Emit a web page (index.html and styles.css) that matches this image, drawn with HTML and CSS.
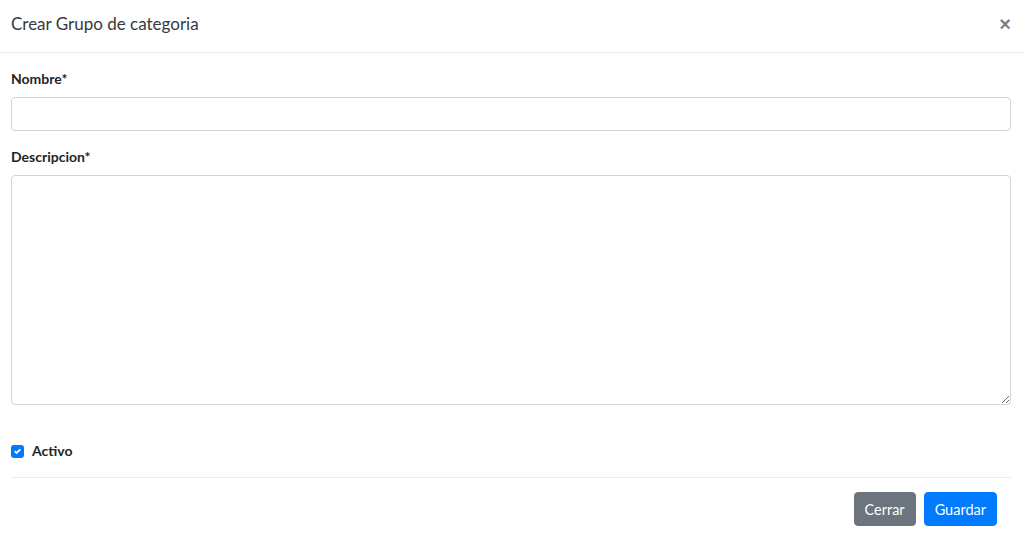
FILE: index.html
```html
<!DOCTYPE html>
<html lang="es">
<head>
<meta charset="utf-8">
<title>Crear Grupo de categoria</title>
<link rel="stylesheet" href="styles.css">
</head>
<body>
<div class="modal">
  <div class="modal-header">
    <h4 class="modal-title">Crear Grupo de categoria</h4>
    <button class="close" type="button" aria-label="Close">&times;</button>
  </div>
  <form class="modal-body">
    <div class="form-group">
      <label class="label" for="nombre">Nombre*</label>
      <input class="control" id="nombre" type="text">
    </div>
    <div class="form-group">
      <label class="label" for="desc">Descripcion*</label>
      <textarea class="control area" id="desc"></textarea>
    </div>
    <div class="check-row">
      <input class="check" id="activo" type="checkbox" checked>
      <label class="check-label" for="activo">Activo</label>
    </div>
    <div class="modal-footer">
      <button class="btn btn-secondary" type="button">Cerrar</button>
      <button class="btn btn-primary" type="button">Guardar</button>
    </div>
  </form>
</div>
</body>
</html>
```

FILE: styles.css
```css
* { box-sizing: border-box; }
html, body { margin: 0; padding: 0; background: #fff; }
body {
  font-family: "Lato", "Noto Sans", sans-serif;
  color: #212529;
  font-size: 14px;
}
.modal-header {
  height: 53px;
  padding: 0 11px;
  display: flex;
  align-items: center;
  justify-content: space-between;
  border-bottom: 1px solid #e9ecef;
}
.modal-title {
  margin: 0;
  font-size: 17px;
  font-weight: 400;
  color: #343a40;
  line-height: 22px;
  padding-bottom: 4px;
}
.close {
  border: 0;
  background: transparent;
  font-family: "Liberation Sans", sans-serif;
  font-size: 20px;
  font-weight: 700;
  color: #000;
  opacity: .5;
  padding: 0 0 4px;
  line-height: 1;
  margin-right: 2px;
  cursor: pointer;
}
.modal-body {
  padding: 15px 13px 0 11px;
}
.form-group { margin-bottom: 15px; }
.label {
  display: block;
  font-weight: 700;
  font-size: 14px;
  line-height: 22px;
  margin-bottom: 7px;
}
.control {
  display: block;
  width: 100%;
  height: 34px;
  border: 1px solid #ced4da;
  border-radius: 4px;
  padding: 6px 11px;
  font: inherit;
  background: #fff;
}
.area {
  height: 230px;
  resize: vertical;
}
.check-row {
  margin-top: 35px;
  display: flex;
  align-items: center;
  gap: 8px;
  height: 22px;
}
.check {
  appearance: none;
  -webkit-appearance: none;
  margin: 0;
  width: 13px;
  height: 13px;
  border-radius: 3px;
  background: #007bff url("data:image/svg+xml,%3Csvg xmlns='http://www.w3.org/2000/svg' viewBox='0 0 8 8'%3E%3Cpath fill='%23fff' d='M6.564.75l-3.59 3.612-1.538-1.55L0 4.26l2.974 2.99L8 2.193z'/%3E%3C/svg%3E") no-repeat center / 7px 7px;
}
.check-label {
  font-weight: 700;
  font-size: 14px;
  line-height: 22px;
}
.modal-footer {
  margin-top: 15px;
  border-top: 1px solid #e9ecef;
  padding: 14px 14px 0 0;
  display: flex;
  justify-content: flex-end;
  gap: 8px;
}
.btn {
  height: 34px;
  padding: 0 10px;
  border: 1px solid transparent;
  border-radius: 4px;
  font-family: inherit;
  font-size: 14.5px;
  color: #fff;
  cursor: pointer;
}
.btn-secondary { background: #6c757d; border-color: #6c757d; }
.btn-primary { background: #007bff; border-color: #007bff; }
```
